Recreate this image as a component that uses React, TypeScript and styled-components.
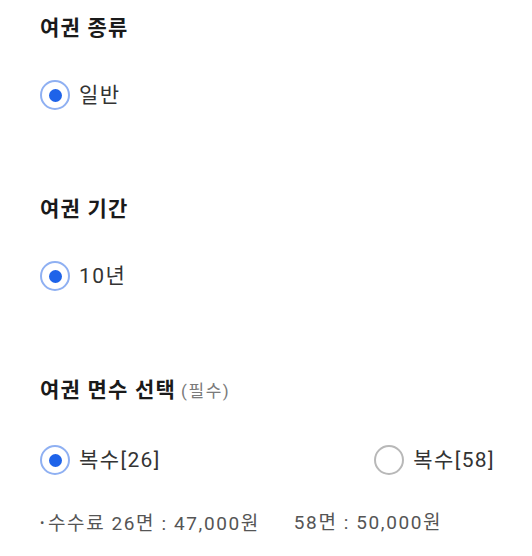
import { useState } from 'react'
import styled, { createGlobalStyle } from 'styled-components'

const GlobalStyle = createGlobalStyle`
  html, body {
    margin: 0;
    padding: 0;
    background: #ffffff;
  }
  body {
    font-family: Roboto, "Noto Sans CJK KR", "Noto Sans", sans-serif;
    color: #222;
  }
`

const Wrapper = styled.div`
  width: 532px;
  padding: 16px 37px 0 40px;
  box-sizing: border-box;
`

const Section = styled.section`
  display: flex;
  flex-direction: column;
  margin-bottom: 87px;
  &:last-child {
    margin-bottom: 0;
  }
`

const Title = styled.h3`
  margin: 0;
  font-size: 21px;
  line-height: 24px;
  font-weight: 700;
  color: #1a1a1a;
  letter-spacing: 1.2px;
`

const Hint = styled.span`
  font-size: 17px;
  font-weight: 400;
  color: #7a7a7a;
  margin-left: 5px;
  letter-spacing: 1.6px;
`

const Options = styled.div<{ gapTop?: number }>`
  display: flex;
  justify-content: space-between;
  margin-top: ${p => p.gapTop ?? 40}px;
`

const Option = styled.label`
  display: flex;
  align-items: center;
  gap: 9px;
  cursor: pointer;
  font-size: 21px;
  line-height: 30px;
  color: #333;
  letter-spacing: 1.4px;
`

const Circle = styled.span<{ checked: boolean }>`
  width: 30px;
  height: 30px;
  box-sizing: border-box;
  border-radius: 50%;
  border: 2px solid ${p => (p.checked ? '#8fb0f2' : '#b8b8b8')};
  display: flex;
  align-items: center;
  justify-content: center;
  &::after {
    content: '';
    width: 13px;
    height: 13px;
    border-radius: 50%;
    background: #1e63e9;
    display: ${p => (p.checked ? 'block' : 'none')};
  }
`

const Fee = styled.p`
  margin: 37px 0 0;
  font-size: 19px;
  line-height: 22px;
  color: #555;
  display: flex;
  gap: 34px;
  letter-spacing: 1.6px;
`

const Bullet = styled.span`
  &::before {
    content: '•';
    font-size: 13px;
    margin-right: 2px;
    vertical-align: 3px;
  }
`

type RadioProps = { label: string; checked: boolean; onSelect: () => void }

const Radio = ({ label, checked, onSelect }: RadioProps) => (
  <Option onClick={onSelect}>
    <Circle checked={checked} />
    {label}
  </Option>
)

const App = () => {
  const [pages, setPages] = useState('26')

  return (
    <Wrapper>
      <GlobalStyle />
      <Section>
        <Title>여권 종류</Title>
        <Options>
          <Radio label="일반" checked onSelect={() => {}} />
        </Options>
      </Section>
      <Section>
        <Title>여권 기간</Title>
        <Options>
          <Radio label="10년" checked onSelect={() => {}} />
        </Options>
      </Section>
      <Section>
        <Title>
          여권 면수 선택<Hint>(필수)</Hint>
        </Title>
        <Options gapTop={42}>
          <Radio label="복수[26]" checked={pages === '26'} onSelect={() => setPages('26')} />
          <Radio label="복수[58]" checked={pages === '58'} onSelect={() => setPages('58')} />
        </Options>
        <Fee>
          <Bullet>수수료 26면 : 47,000원</Bullet>
          <span>58면 : 50,000원</span>
        </Fee>
      </Section>
    </Wrapper>
  )
}

export default App
